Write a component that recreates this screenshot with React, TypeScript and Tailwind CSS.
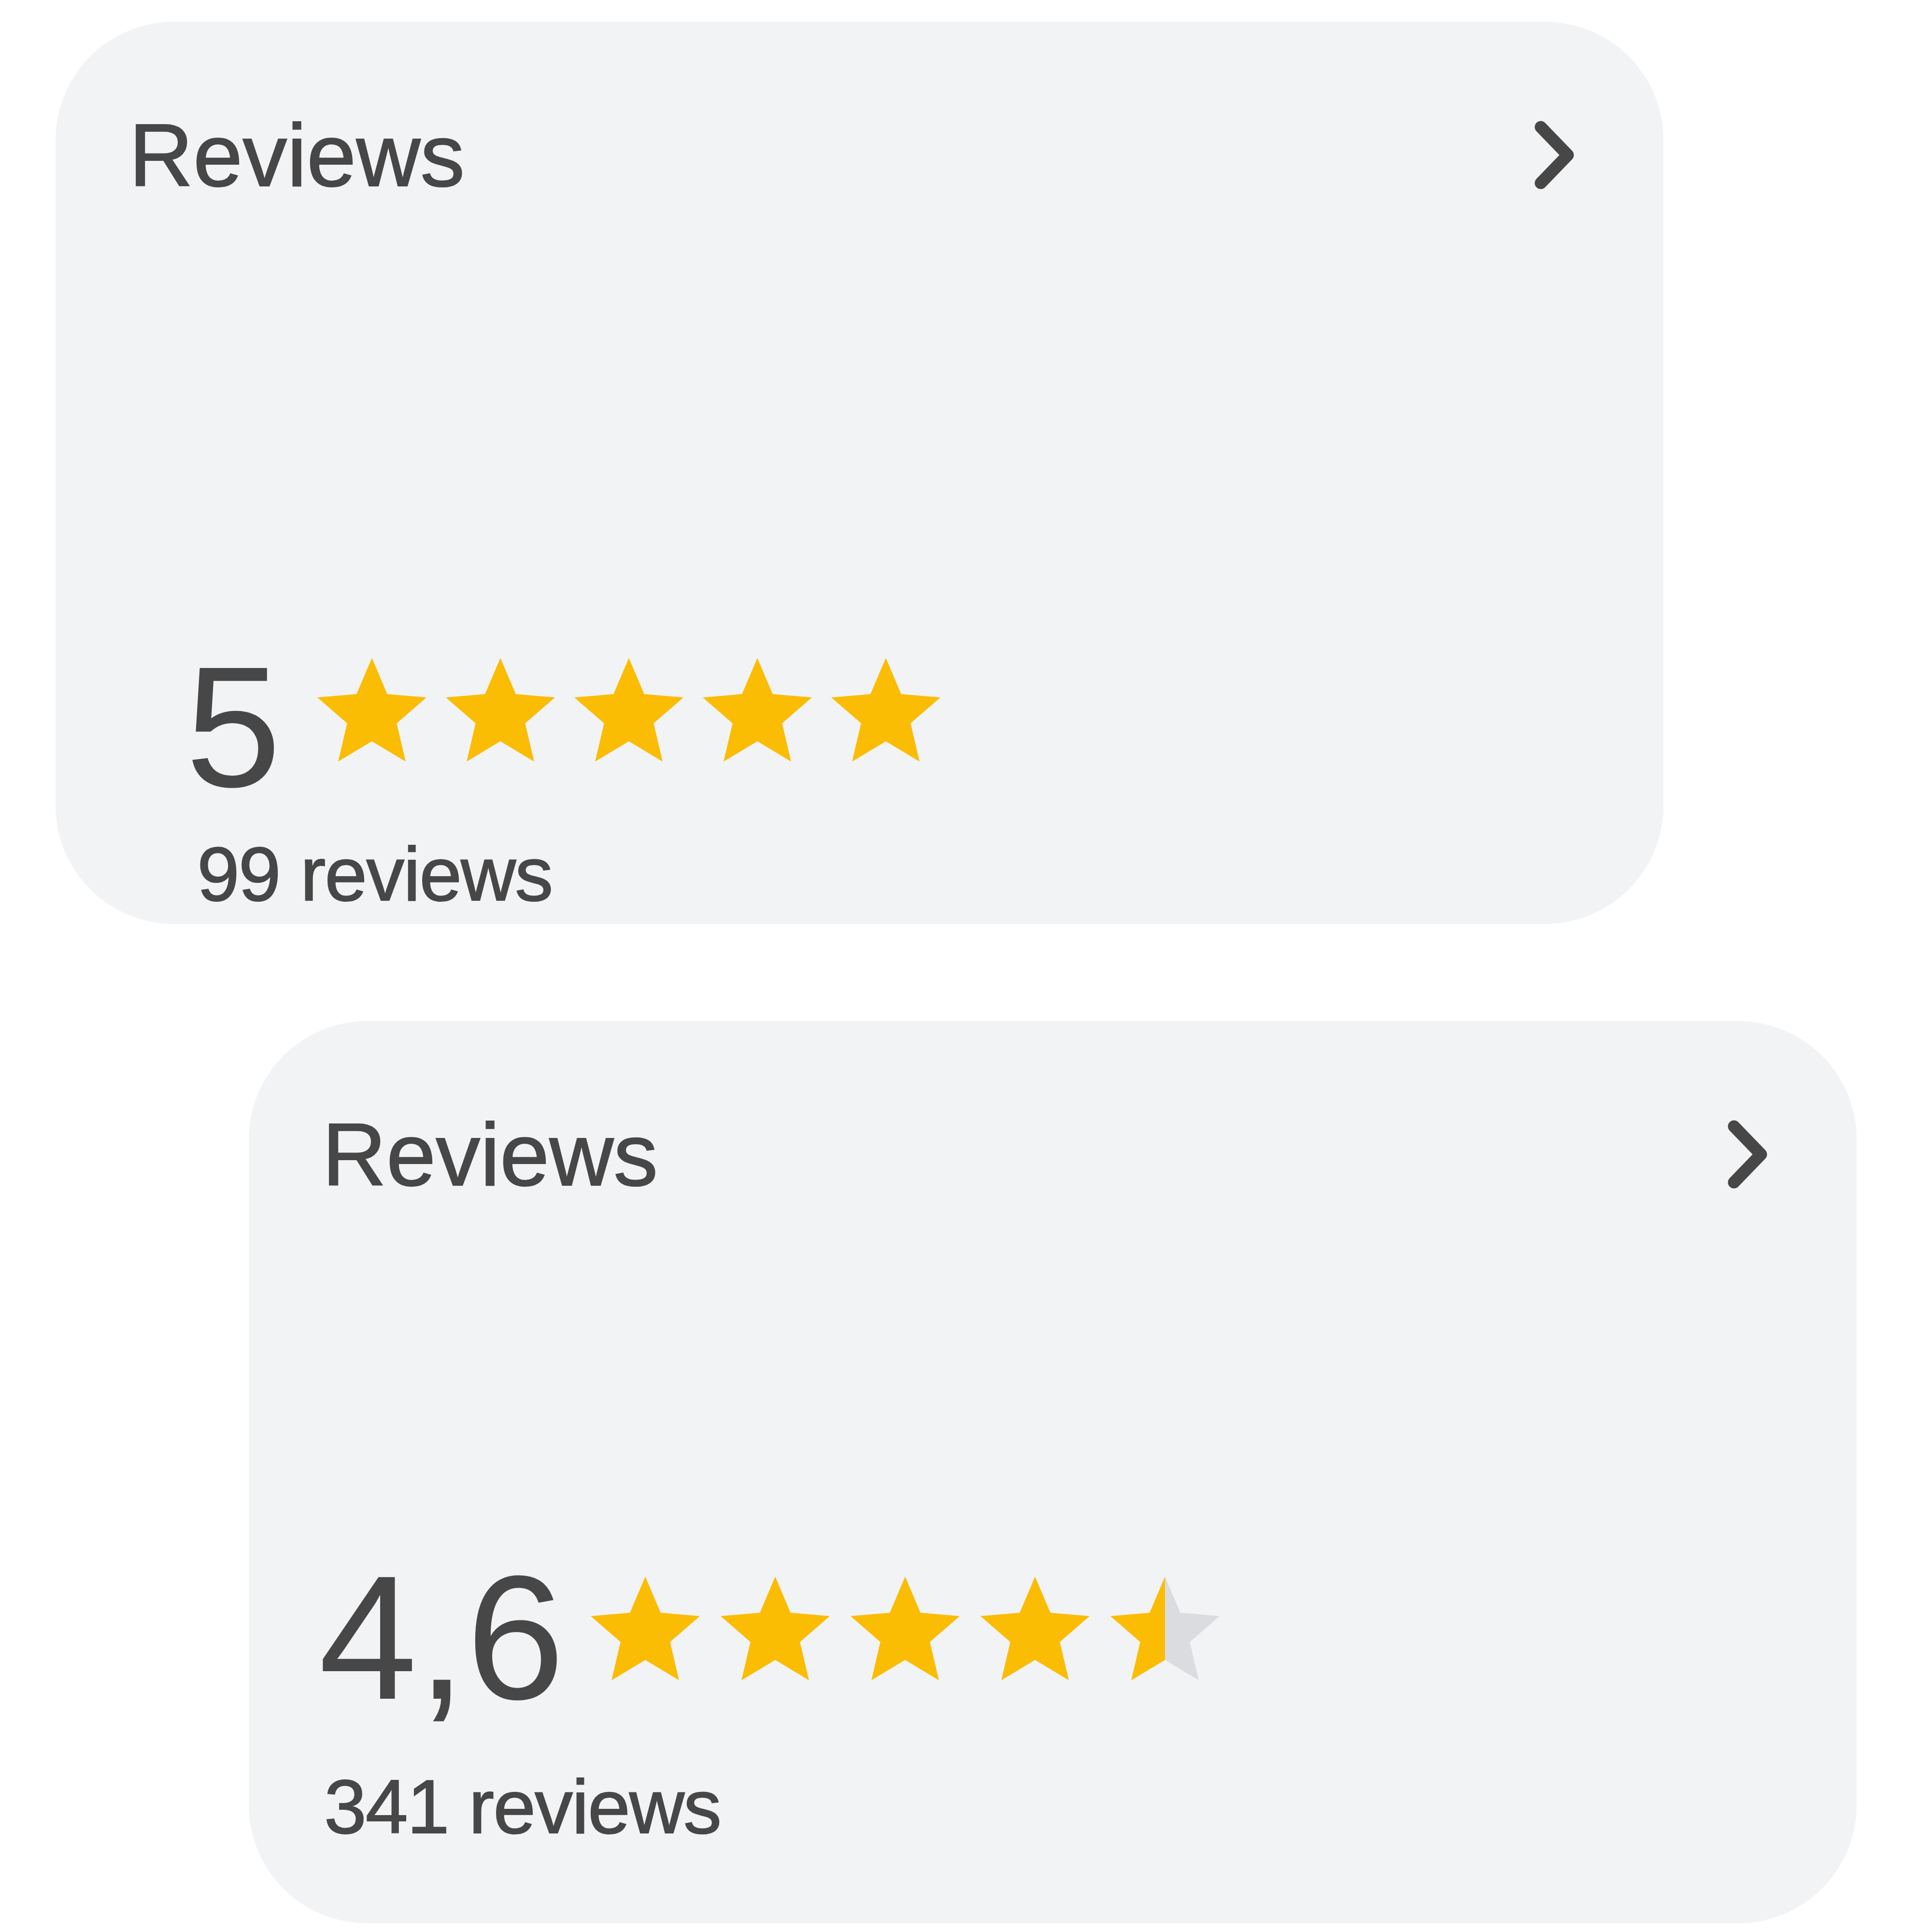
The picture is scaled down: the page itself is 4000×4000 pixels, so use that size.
import React from 'react';

const STAR_PATH = 'M12 17.27L18.18 21l-1.64-7.03L22 9.24l-7.19-.61L12 2 9.19 8.63 2 9.24l5.46 4.73L5.82 21z';

const Star: React.FC<{ fill: number; id: string }> = ({ fill, id }) => (
  <svg width="226" height="215" viewBox="2 2 20 19" className="shrink-0">
    <defs>
      <linearGradient id={id} x1="0" x2="1" y1="0" y2="0">
        <stop offset={fill} stopColor="#fbbc04" />
        <stop offset={fill} stopColor="#dadce0" />
      </linearGradient>
    </defs>
    <path d={STAR_PATH} fill={`url(#${id})`} />
  </svg>
);

const Chevron: React.FC = () => (
  <svg width="86" height="142" viewBox="0 0 86 142" className="shrink-0">
    <polyline
      points="13,13 69,71 13,129"
      fill="none"
      stroke="#474747"
      strokeWidth="25"
      strokeLinecap="round"
      strokeLinejoin="round"
    />
  </svg>
);

interface ReviewCardProps {
  rating: number;
  label: string;
  count: string;
  numberSize: string;
  ratingTop: string;
  blockPad: string;
  numberShift: string;
  starsGap: string;
  starsLeft: string;
  starsTop: string;
  countTop: string;
  prefix: string;
  className?: string;
}

const ReviewCard: React.FC<ReviewCardProps> = ({
  rating, label, count, numberSize, ratingTop, blockPad, numberShift,
  starsGap, starsLeft, starsTop, countTop, prefix, className = '',
}) => {
  // fraction of each star that is gold; partial stars show as half
  const stars = [0, 1, 2, 3, 4].map(i => (rating - i >= 1 ? 1 : rating - i > 0 ? 0.5 : 0));
  return (
    <div className={`w-[3329px] h-[1868px] shrink-0 overflow-hidden rounded-[245px] bg-[#f2f3f5] text-[#474747] flex flex-col ${className}`}>
      <div className="flex items-center justify-between pt-[184px] pl-[152px] pr-[181px]">
        <span className="text-[184px] leading-none [-webkit-text-stroke:2px_#474747]">Reviews</span>
        <Chevron />
      </div>

      <div className={`flex flex-col ${ratingTop} ${blockPad}`}>
        <div className={`flex items-start ${numberShift}`}>
          <span className={`${numberSize} leading-none`}>{label}</span>
          <div className={`flex ${starsGap} ${starsLeft} ${starsTop}`}>
            {stars.map((f, i) => (
              <Star key={i} fill={f} id={`${prefix}-star-${i}`} />
            ))}
          </div>
        </div>
        <span className={`text-[158px] leading-none tracking-[-2px] [-webkit-text-stroke:2px_#474747] ${countTop}`}>{count}</span>
      </div>
    </div>
  );
};

const App: React.FC = () => {
  return (
    <div className="w-[4000px] h-[4000px] bg-white pt-[45px] pl-[115px] flex flex-col items-start gap-[201px] font-['Liberation_Sans',Arial,sans-serif]">
      <ReviewCard
        prefix="a"
        rating={5}
        label="5"
        count="99 reviews"
        numberSize="text-[356px]"
        ratingTop="mt-[914px]"
        blockPad="pl-[293px]"
        numberShift="-ml-[24px]"
        starsGap="gap-[40px]"
        starsLeft="ml-[75px]"
        starsTop="mt-[35px]"
        countTop="mt-[47px]"
      />
      <ReviewCard
        prefix="b"
        rating={4.6}
        label="4,6"
        count="341 reviews"
        numberSize="text-[366px]"
        ratingTop="mt-[726px]"
        blockPad="pl-[156px]"
        numberShift="-ml-[11px]"
        starsGap="gap-[43px]"
        starsLeft="ml-[54px]"
        starsTop="mt-[56px]"
        countTop="mt-[87px]"
        className="ml-[400px]"
      />
    </div>
  );
};

export default App;
